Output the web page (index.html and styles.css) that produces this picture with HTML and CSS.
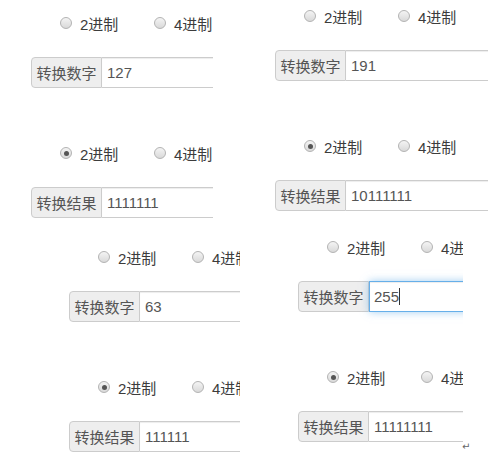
FILE: index.html
```html
<!DOCTYPE html>
<html lang="zh-CN">
<head>
    <meta charset="UTF-8">
    <title>进制转换</title>
    <link rel="stylesheet" href="styles.css">
</head>
<body>
    <div class="sheet">
        <!-- 127 -->
        <div class="shot shot-a">
            <div class="radios">
                <label class="radio-item"><span class="radio"></span>2进制</label>
                <label class="radio-item"><span class="radio"></span>4进制</label>
            </div>
            <div class="input-group">
                <span class="addon">转换数字</span>
                <div class="field">127</div>
            </div>
            <div class="radios radios-next">
                <label class="radio-item"><span class="radio checked"></span>2进制</label>
                <label class="radio-item"><span class="radio"></span>4进制</label>
            </div>
            <div class="input-group">
                <span class="addon">转换结果</span>
                <div class="field">1111111</div>
            </div>
        </div>

        <!-- 191 -->
        <div class="shot shot-b">
            <div class="radios">
                <label class="radio-item"><span class="radio"></span>2进制</label>
                <label class="radio-item"><span class="radio"></span>4进制</label>
            </div>
            <div class="input-group">
                <span class="addon">转换数字</span>
                <div class="field">191</div>
            </div>
            <div class="radios radios-next">
                <label class="radio-item"><span class="radio checked"></span>2进制</label>
                <label class="radio-item"><span class="radio"></span>4进制</label>
            </div>
            <div class="input-group">
                <span class="addon">转换结果</span>
                <div class="field">10111111</div>
            </div>
        </div>

        <!-- 63 -->
        <div class="shot shot-c">
            <div class="radios">
                <label class="radio-item"><span class="radio"></span>2进制</label>
                <label class="radio-item"><span class="radio"></span>4进制</label>
            </div>
            <div class="input-group">
                <span class="addon">转换数字</span>
                <div class="field">63</div>
            </div>
            <div class="radios radios-next">
                <label class="radio-item"><span class="radio checked"></span>2进制</label>
                <label class="radio-item"><span class="radio"></span>4进制</label>
            </div>
            <div class="input-group">
                <span class="addon">转换结果</span>
                <div class="field">111111</div>
            </div>
        </div>

        <!-- 255, input focused -->
        <div class="shot shot-d">
            <div class="radios">
                <label class="radio-item"><span class="radio"></span>2进制</label>
                <label class="radio-item"><span class="radio"></span>4进制</label>
            </div>
            <div class="input-group">
                <span class="addon">转换数字</span>
                <div class="field focus">255<span class="caret"></span></div>
            </div>
            <div class="radios radios-next">
                <label class="radio-item"><span class="radio checked"></span>2进制</label>
                <label class="radio-item"><span class="radio"></span>4进制</label>
            </div>
            <div class="input-group">
                <span class="addon">转换结果</span>
                <div class="field">11111111</div>
            </div>
        </div>

        <span class="return-mark">↵</span>
    </div>
</body>
</html>
```

FILE: styles.css
```css
body {
    margin: 0;
    background: #ffffff;
    font-family: "Liberation Sans", "Noto Sans CJK SC", sans-serif;
    font-size: 15px;
    color: #555555;
}
.sheet {
    position: relative;
    width: 500px;
    height: 460px;
    display: grid;
    grid-template-columns: 250px 250px;
    grid-template-rows: 230px 230px;
}
.shot {
    overflow: hidden;
    box-sizing: border-box;
}
.shot-a {
    width: 213px;
    padding-top: 13px;
    padding-left: 31px;
}
.shot-b {
    width: 238px;
    padding-top: 6px;
    padding-left: 25px;
}
.shot-c {
    width: 240px;
    padding-top: 17px;
    padding-left: 69px;
}
.shot-d {
    width: 213px;
    padding-top: 7px;
    padding-left: 48px;
}
.radios {
    display: flex;
    align-items: center;
    height: 20px;
    padding-left: 29px;
    white-space: nowrap;
}
.radios-next {
    margin-top: 55px;
}
.radio-item {
    display: flex;
    align-items: center;
    flex: 0 0 94px;
    color: #3c3c3c;
}
.radio {
    box-sizing: border-box;
    width: 12px;
    height: 12px;
    margin-right: 8px;
    border-radius: 50%;
    border: 1px solid #b3b3b3;
    background: linear-gradient(#f4f4f4, #d9d9d9);
    display: flex;
    align-items: center;
    justify-content: center;
}
.radio.checked::after {
    content: "";
    width: 5px;
    height: 5px;
    border-radius: 50%;
    background: #555555;
}
.input-group {
    display: flex;
    width: 300px;
    height: 31px;
    margin-top: 24px;
    box-sizing: border-box;
}
.addon {
    flex: 0 0 71px;
    box-sizing: border-box;
    display: flex;
    align-items: center;
    justify-content: center;
    background: #eeeeee;
    border: 1px solid #cccccc;
    border-radius: 4px 0 0 4px;
    color: #555555;
    white-space: nowrap;
}
.field {
    flex: 1;
    box-sizing: border-box;
    display: flex;
    align-items: center;
    padding-left: 5px;
    border: 1px solid #cccccc;
    border-left: 0;
    background: #ffffff;
    color: #555555;
    box-shadow: inset 0 1px 1px rgba(0, 0, 0, 0.075);
}
.field.focus {
    border: 1px solid #66afe9;
    padding-left: 4px;
    box-shadow: inset 0 1px 1px rgba(0, 0, 0, 0.075), 0 0 8px rgba(102, 175, 233, 0.6);
}
.caret {
    width: 1px;
    height: 17px;
    background: #333333;
}
.return-mark {
    position: absolute;
    left: 462px;
    top: 441px;
    font-family: "DejaVu Sans", sans-serif;
    font-size: 10px;
    color: #666666;
}
```
